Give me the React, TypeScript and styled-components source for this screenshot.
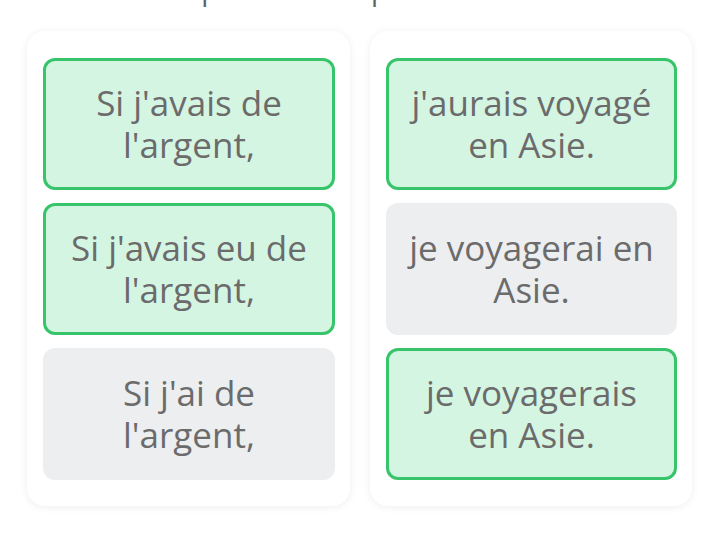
import styled, { createGlobalStyle } from "styled-components";

const GlobalStyle = createGlobalStyle`
  html, body {
    margin: 0;
    padding: 0;
    background: #ffffff;
  }
  body {
    font-family: "Open Sans", "Noto Sans", sans-serif;
    overflow: hidden;
  }
`;

const Page = styled.div`
  width: 720px;
  height: 540px;
  overflow: hidden;
  background: #ffffff;
`;

const Title = styled.div`
  margin-top: -26px;
  height: 30px;
  padding-left: 40px;
  font-size: 28px;
  line-height: 30px;
  color: #5d6166;
  white-space: nowrap;
`;

const Columns = styled.div`
  display: grid;
  grid-template-columns: 323px 322px;
  gap: 20px;
  padding: 27px 0 0 27px;
`;

const Card = styled.div`
  background: #ffffff;
  border-radius: 18px;
  box-shadow: 0 1px 8px rgba(0, 0, 0, 0.07);
  padding: 27px 15px 26px 16px;
  display: flex;
  flex-direction: column;
  gap: 13px;
`;

const Tile = styled.div<{ $selected?: boolean }>`
  box-sizing: border-box;
  height: 132px;
  border-radius: 12px;
  display: flex;
  align-items: center;
  justify-content: center;
  text-align: center;
  padding: 0 6px;
  font-size: 35px;
  line-height: 42px;
  color: #6b6b6b;
  background: ${({ $selected }) => ($selected ? "#d5f5e3" : "#eceef0")};
  border: ${({ $selected }) => ($selected ? "3px solid #38c46a" : "none")};
`;

const left = [
  { text: ["Si j'avais de", "l'argent,"], selected: true },
  { text: ["Si j'avais eu de", "l'argent,"], selected: true },
  { text: ["Si j'ai de", "l'argent,"], selected: false },
];

const right = [
  { text: ["j'aurais voyagé", "en Asie."], selected: true },
  { text: ["je voyagerai en", "Asie."], selected: false },
  { text: ["je voyagerais", "en Asie."], selected: true },
];

const App = () => {
  return (
    <Page>
      <GlobalStyle />
      <Title>Associez les paires correspondantes</Title>
      <Columns>
        {[left, right].map((col, i) => (
          <Card key={i}>
            {col.map((item) => (
              <Tile key={item.text[0]} $selected={item.selected}>
                <div>
                  {item.text[0]}
                  <br />
                  {item.text[1]}
                </div>
              </Tile>
            ))}
          </Card>
        ))}
      </Columns>
    </Page>
  );
};

export default App;
